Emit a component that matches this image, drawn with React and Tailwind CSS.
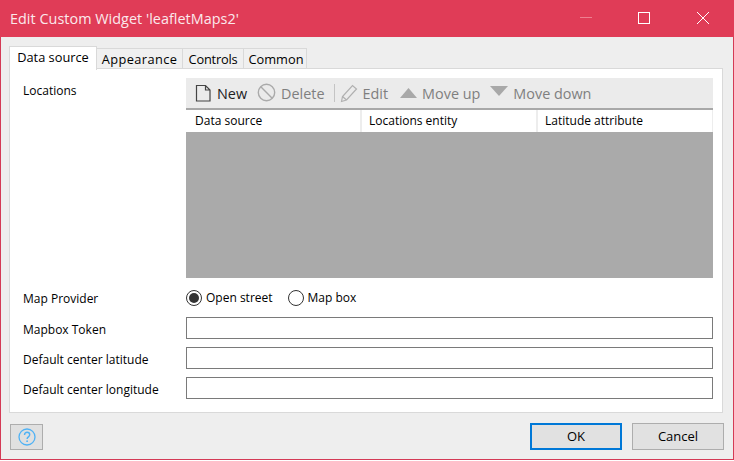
import React from "react";

const Field = ({ label }) => (
  <div className="flex items-center h-[22px]">
    <span className="w-[163px] shrink-0 text-[12px] text-black pt-[3px]">{label}</span>
    <div className="h-[22px] flex-1 border border-[#7a7a7a] bg-white" />
  </div>
);

const Tab = ({ children, active, w }) =>
  active ? (
    <div className={"h-[24px] pt-[1px] text-center -mb-px z-10 relative bg-white border border-b-0 border-[#d9d9d9] text-[12.8px] leading-[18px] text-black " + w}>{children}</div>
  ) : (
    <div className={"h-[22px] mt-[2px] pt-[1px] text-center bg-[#f0f0f0] border border-l-0 border-b-0 border-[#d9d9d9] text-[12.8px] leading-[18px] text-black " + w}>{children}</div>
  );

const Radio = ({ checked, label }) => (
  <div className="flex items-center gap-[4px]">
    <div className="w-[16px] h-[16px] rounded-full border border-[#333] bg-white flex items-center justify-center">
      {checked && <div className="w-[10px] h-[10px] rounded-full bg-[#333]" />}
    </div>
    <span className="text-[12px] text-black">{label}</span>
  </div>
);

const Tool = ({ icon, label, className }) => (
  <div className={"flex items-center gap-[5px] " + className}>
    {icon}
    <span className="pt-[2px]">{label}</span>
  </div>
);

export default function App() {
  return (
    <div className="w-[734px] h-[461px] bg-white" style={{ fontFamily: '"Open Sans", "Noto Sans", sans-serif' }}>
      <div className="w-[734px] h-[460px] flex flex-col bg-[#eeeeee] border border-t-0 border-[#d43a55]">
        <div className="h-[37px] shrink-0 -mx-px bg-[#e03c57] flex items-center justify-between text-white">
          <span className="pl-[10px] text-[14.4px] text-[#fbe9ec] tracking-[0.03px]">Edit Custom Widget 'leafletMaps2'</span>
          <div className="flex items-center pr-[25px]">
            <svg width="12" height="12" viewBox="0 0 12 12" className="mr-[46px] -mt-[1px]"><path d="M0 5.500h12" stroke="#ee7f90" strokeWidth="1" /></svg>
            <svg width="12" height="12" viewBox="0 0 12 12" className="mr-[47px] -mt-[1px]"><rect x="0.500" y="0.500" width="11" height="11" fill="none" stroke="#fff" strokeWidth="1" /></svg>
            <svg width="12" height="12" viewBox="0 0 12 12" className="-mt-[1px]"><path d="M0 0l12 12M12 0L0 12" stroke="#fff" strokeWidth="1" /></svg>
          </div>
        </div>

        <div className="flex-1 flex flex-col pl-[8px] pr-[10px] pt-[9px]">
          <div className="flex h-[22px]">
            <Tab active w="w-[88px]">Data source</Tab>
            <Tab w="w-[86px] tracking-[0.4px]">Appearance</Tab>
            <Tab w="w-[61px] tracking-[-0.2px]">Controls</Tab>
            <Tab w="w-[63px] pl-[2px]">Common</Tab>
          </div>

          <div className="h-[345px] w-[714px] bg-white border border-[#d9d9d9] flex flex-col pl-[13px] pr-[9px] pt-[9px]">
            <div className="flex h-[200px]">
              <span className="w-[163px] shrink-0 text-[12px] text-black pt-[4px]">Locations</span>
              <div className="flex-1 flex flex-col">
                <div className="h-[31px] bg-[#ebebeb] border-b-2 border-[#a8a8a8] flex items-center pl-[9px] text-[14.4px] text-[#7f7f7f] box-content -mb-[1px]">
                  <Tool
                    className="text-[#222] mr-[10px]"
                    label="New"
                    icon={<svg width="17" height="18" viewBox="0 0 17 18"><path d="M1.500 1.500h9l4.500 4.500v11H1.500zM10.500 1.500V6H15" fill="none" stroke="#444" strokeWidth="1.200" /></svg>}
                  />
                  <Tool
                    className="mr-[9px]"
                    label="Delete"
                    icon={<svg width="19" height="19" viewBox="0 0 19 19"><circle cx="9.500" cy="9.500" r="8.200" fill="none" stroke="#aaa" strokeWidth="1.400" /><path d="M3.800 3.800l11.400 11.400" stroke="#aaa" strokeWidth="1.400" /></svg>}
                  />
                  <div className="w-px h-[18px] bg-[#c4c4c4] mr-[5px]" />
                  <Tool
                    className="mr-[12px]"
                    label="Edit"
                    icon={<svg width="18" height="20" viewBox="0 0 18 20"><path d="M1.500 18.500l1-5L12.500 2.500l4 3.500-10 11z M2.500 13.500l4 3.500" fill="none" stroke="#b0b0b0" strokeWidth="1.200" /></svg>}
                  />
                  <Tool
                    className="mr-[10px]"
                    label="Move up"
                    icon={<svg width="17" height="10" viewBox="0 0 17 10"><path d="M8.500 0L17 10H0z" fill="#a8a8a8" /></svg>}
                  />
                  <Tool
                    label="Move down"
                    icon={<svg width="18" height="10" viewBox="0 0 18 10" className="-mt-[3px]"><path d="M0 0h18L9 10z" fill="#a8a8a8" /></svg>}
                  />
                </div>
                <div className="h-[22px] mt-[1px] bg-white flex text-[12px] text-black leading-[22px] border-r border-[#ededed]">
                  <div className="w-[176px] pl-[9px] border-r-2 border-[#ededed]">Data source</div>
                  <div className="w-[176px] pl-[7px] border-r-2 border-[#ededed]">Locations entity</div>
                  <div className="flex-1 pl-[7px]">Latitude attribute</div>
                </div>
                <div className="h-[146px] shrink-0 bg-[#aaaaaa]" />
              </div>
            </div>

            <div className="mt-[10px] flex items-center h-[20px]">
              <span className="w-[163px] shrink-0 text-[12px] text-black pt-px">Map Provider</span>
              <div className="flex items-center gap-[15px]">
                <Radio checked label="Open street" />
                <Radio label="Map box" />
              </div>
            </div>
            <div className="flex flex-col gap-[8px] mt-[9px]">
              <Field label="Mapbox Token" />
              <Field label="Default center latitude" />
              <Field label="Default center longitude" />
            </div>
          </div>

          <div className="flex items-end justify-between h-[27px] mt-[10px] -mr-[1px]">
            <div className="ml-[1px] w-[33px] h-[26px] bg-[#e0e0e0] border border-[#adadad] flex items-center justify-center">
              <svg width="18" height="18" viewBox="0 0 18 18">
                <circle cx="9" cy="9" r="8" fill="none" stroke="#4fb2f5" strokeWidth="1.300" />
                <path d="M6.500 7c0-1.700 1.100-2.700 2.600-2.700S11.700 5.300 11.700 6.800c0 2-2.600 2.200-2.600 4.200" fill="none" stroke="#4fb2f5" strokeWidth="1.400" />
                <circle cx="9.100" cy="13.200" r="0.900" fill="#4fb2f5" />
              </svg>
            </div>
            <div className="flex gap-[10px]">
              <div className="w-[92px] h-[27px] bg-[#e1e1e1] border-2 border-[#0078d7] flex items-center justify-center text-[13px] text-black">OK</div>
              <div className="w-[92px] h-[27px] bg-[#e1e1e1] border border-[#adadad] flex items-center justify-center text-[13px] text-black">Cancel</div>
            </div>
          </div>
        </div>
      </div>
    </div>
  );
}
